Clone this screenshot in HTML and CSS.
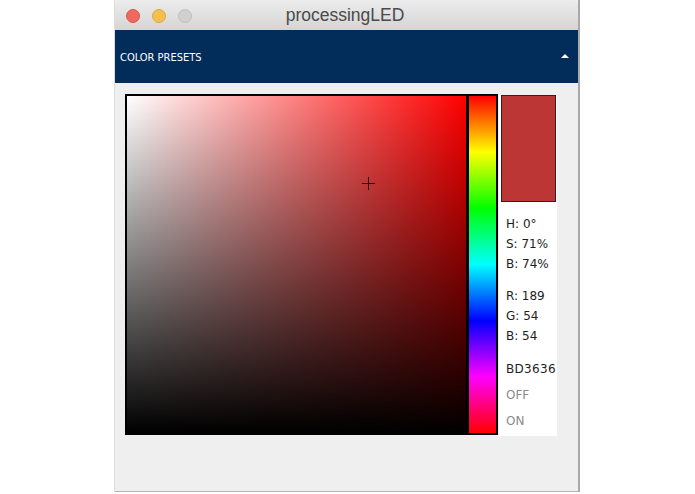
FILE: index.html
```html
<!DOCTYPE html>
<html>
<head>
<meta charset="utf-8">
<link rel="stylesheet" href="styles.css">
</head>
<body>
<div class="window">
  <div class="titlebar">
    <div class="lights">
      <span class="light red"></span>
      <span class="light yellow"></span>
      <span class="light gray"></span>
    </div>
    <div class="title">processingLED</div>
  </div>
  <div class="presets">
    <span class="presets-label">COLOR PRESETS</span>
    <span class="caret"></span>
  </div>
  <div class="content">
    <div class="picker">
      <div class="sb">
        <div class="cross"></div>
      </div>
      <div class="hue"></div>
    </div>
    <div class="info">
      <div class="swatch"></div>
      <div class="group first">
        <div class="line">H: 0°</div>
        <div class="line">S: 71%</div>
        <div class="line">B: 74%</div>
      </div>
      <div class="group">
        <div class="line">R: 189</div>
        <div class="line">G: 54</div>
        <div class="line">B: 54</div>
      </div>
      <div class="line hex">BD3636</div>
      <div class="line toggle">OFF</div>
      <div class="line toggle">ON</div>
    </div>
  </div>
</div>
</body>
</html>
```
FILE: styles.css
```css
html, body {
  margin: 0;
  padding: 0;
  background: #ffffff;
}
body {
  padding-left: 115px;
}
.window {
  width: 463px;
  height: 491px;
  background: #efefef;
  border-right: 2px solid #a9a9a9;
  border-bottom: 1px solid #b5b5b5;
  box-shadow: -1px 0 0 #dcdcdc;
  display: flex;
  flex-direction: column;
  overflow: hidden;
}
.titlebar {
  height: 30px;
  background: linear-gradient(#ececec, #d5d5d5);
  border-radius: 5px 5px 0 0;
  display: flex;
  align-items: center;
  box-sizing: border-box;
}
.lights {
  display: flex;
  gap: 12px;
  padding-left: 11px;
  padding-top: 2px;
}
.light {
  width: 14px;
  height: 14px;
  border-radius: 50%;
  box-sizing: border-box;
}
.light.red { background: #ed6a5e; border: 1px solid #d8574c; }
.light.yellow { background: #f5be4f; border: 1px solid #dda83a; }
.light.gray { background: #d0d0d0; border: 1px solid #c0c0c0; }
.title {
  flex: 1;
  text-align: center;
  font-family: "Liberation Sans", Arial, sans-serif;
  font-size: 17.5px;
  color: #4a4a4a;
  padding-right: 80px;
  padding-top: 1px;
}
.presets {
  height: 53px;
  background: #022d5b;
  display: flex;
  align-items: center;
  justify-content: space-between;
  padding: 0 9px 0 5px;
}
.presets-label {
  font-family: "DejaVu Sans Condensed", "Liberation Sans", sans-serif;
  font-stretch: condensed;
  font-size: 11px;
  color: #ffffff;
  letter-spacing: 0;
  padding-top: 1px;
}
.caret {
  width: 0;
  height: 0;
  border-left: 4px solid transparent;
  border-right: 4px solid transparent;
  border-bottom: 4px solid #ffffff;
  margin-top: -1px;
}
.content {
  display: flex;
  align-items: flex-start;
  padding: 11px 0 0 10px;
}
.picker {
  display: flex;
  gap: 3px;
  background: #000;
  padding: 2px;
  width: 369px;
  height: 337px;
}
.sb {
  width: 339px;
  height: 337px;
  background:
    linear-gradient(to top, #000 0%, rgba(0,0,0,0) 100%),
    linear-gradient(to right, #ffffff 0%, #ff0000 100%);
  position: relative;
}
.cross {
  position: absolute;
  left: 235px;
  top: 81px;
  width: 13px;
  height: 13px;
}
.cross::before, .cross::after {
  content: "";
  position: absolute;
  background: #2a0a0a;
}
.cross::before { left: 6px; top: 0; width: 1px; height: 13px; }
.cross::after { top: 6px; left: 0; height: 1px; width: 13px; }
.hue {
  width: 27px;
  height: 337px;
  background: linear-gradient(to bottom,
    #ff0000 0%, #ffff00 16.66%, #00ff00 33.33%, #00ffff 50%,
    #0000ff 66.66%, #ff00ff 83.33%, #ff0000 100%);
}
.info {
  width: 58px;
  height: 341px;
  margin-top: 1px;
  margin-left: 1px;
  background: #ffffff;
  padding-left: 2px;
  box-sizing: border-box;
  font-family: "DejaVu Sans", sans-serif;
  font-size: 12px;
  color: #1e1e1e;
}
.swatch {
  width: 55px;
  height: 107px;
  box-sizing: border-box;
  background: #bd3636;
  border: 1px solid #3a1a1a;
}
.line {
  height: 20px;
  line-height: 20px;
  padding-left: 5px;
  white-space: nowrap;
}
.group.first { margin-top: 12px; }
.group { margin-top: 12px; }
.hex { margin-top: 13px; letter-spacing: 0.3px; }
.toggle {
  margin-top: 6px;
  color: #8a8a8a;
}
```
